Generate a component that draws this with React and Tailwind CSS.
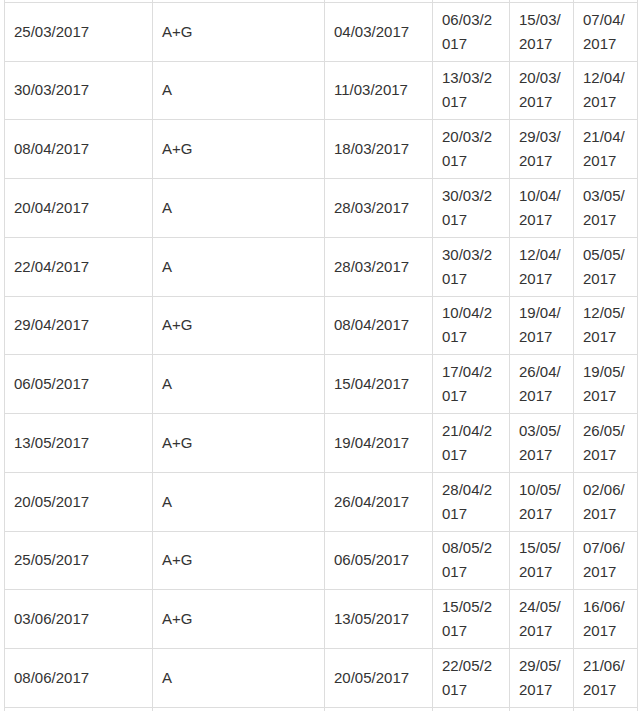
import React from 'react';

const rows = [
  ['25/03/2017', 'A+G', '04/03/2017', '06/03/2017', '15/03/2017', '07/04/2017'],
  ['30/03/2017', 'A', '11/03/2017', '13/03/2017', '20/03/2017', '12/04/2017'],
  ['08/04/2017', 'A+G', '18/03/2017', '20/03/2017', '29/03/2017', '21/04/2017'],
  ['20/04/2017', 'A', '28/03/2017', '30/03/2017', '10/04/2017', '03/05/2017'],
  ['22/04/2017', 'A', '28/03/2017', '30/03/2017', '12/04/2017', '05/05/2017'],
  ['29/04/2017', 'A+G', '08/04/2017', '10/04/2017', '19/04/2017', '12/05/2017'],
  ['06/05/2017', 'A', '15/04/2017', '17/04/2017', '26/04/2017', '19/05/2017'],
  ['13/05/2017', 'A+G', '19/04/2017', '21/04/2017', '03/05/2017', '26/05/2017'],
  ['20/05/2017', 'A', '26/04/2017', '28/04/2017', '10/05/2017', '02/06/2017'],
  ['25/05/2017', 'A+G', '06/05/2017', '08/05/2017', '15/05/2017', '07/06/2017'],
  ['03/06/2017', 'A+G', '13/05/2017', '15/05/2017', '24/05/2017', '16/06/2017'],
  ['08/06/2017', 'A', '20/05/2017', '22/05/2017', '29/05/2017', '21/06/2017'],
  ['', '', '', '', '', ''],
];

export default function App() {
  return (
    <div className="w-[640px] h-[711px] overflow-hidden bg-white pl-[4px]">
      <table
        className="-mt-[57px] w-[633px] table-fixed border-collapse text-[15px] leading-[24px] text-[#333]"
        style={{ fontFamily: '"Liberation Sans", Arial, sans-serif' }}
      >
        <colgroup>
          <col className="w-[148px]" />
          <col className="w-[172px]" />
          <col className="w-[108px]" />
          <col className="w-[77px]" />
          <col className="w-[64px]" />
          <col className="w-[64px]" />
        </colgroup>
        <tbody>
          {/* row above the visible part, only its bottom border shows */}
          <tr className="h-[58.75px]">
            {[0, 1, 2, 3, 4, 5].map((j) => (
              <td key={j} className="border border-[#ddd]" />
            ))}
          </tr>
          {rows.map((row, i) => (
            <tr key={i} className="h-[58.75px]">
              {row.map((cell, j) => (
                <td
                  key={j}
                  className="border border-[#ddd] pl-[9px] pr-[11px] py-[4.875px] align-middle break-all"
                >
                  {cell}
                </td>
              ))}
            </tr>
          ))}
        </tbody>
      </table>
    </div>
  );
}
